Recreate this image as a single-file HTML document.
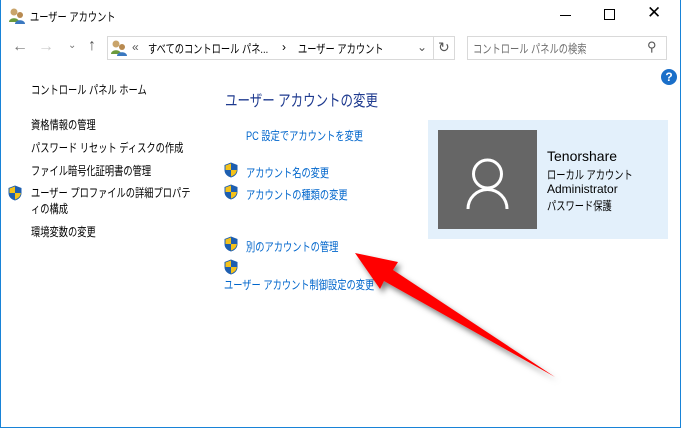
<!DOCTYPE html>
<html><head><meta charset="utf-8"><style>
*{margin:0;padding:0;box-sizing:border-box}
body{width:681px;height:429px;background:#fff;position:relative;overflow:hidden;font-family:"Liberation Sans","Noto Sans CJK JP",sans-serif;font-size:12px;color:#000}
.a{position:absolute;white-space:nowrap}
.j{transform:scaleX(0.77);transform-origin:0 0}
.l{color:#0066cc}
.sh{position:absolute;width:14px;height:16px}
</style></head><body>
<div class="a" style="left:0;top:0;width:681px;height:428px;border:1px solid #1883d7;border-top:none"></div>
<svg class="a" style="left:8px;top:7px" width="18" height="18" viewBox="0 0 18 18"><circle cx="6" cy="5" r="3.5" fill="#c9a46a"/><path d="M1 15c0-5 10-5 10 0z" fill="#6c9a3c"/><circle cx="12" cy="8" r="3" fill="#b88a50"/><path d="M7 17c0-5 10-5 10 0z" fill="#3a78c0"/></svg>
<div class="a j" style="left:30px;top:8px">ユーザー アカウント</div>
<div class="a" style="left:560px;top:15px;width:11px;height:1px;background:#000"></div>
<div class="a" style="left:604px;top:9px;width:11px;height:11px;border:1px solid #000"></div>
<div class="a" style="left:647px;top:3px;font-size:17px">✕</div>
<div class="a" style="left:12px;top:38px;font-size:16px;color:#777">←</div>
<div class="a" style="left:38px;top:38px;font-size:16px;color:#ccc">→</div>
<div class="a" style="left:68px;top:40px;font-size:10px;color:#777">⌄</div>
<div class="a" style="left:88px;top:37px;font-size:16px;color:#555">↑</div>
<div class="a" style="left:107px;top:36px;width:348px;height:24px;border:1px solid #d9d9d9"></div>
<svg class="a" style="left:110px;top:39px" width="18" height="18" viewBox="0 0 18 18"><circle cx="6" cy="5" r="3.5" fill="#c9a46a"/><path d="M1 15c0-5 10-5 10 0z" fill="#6c9a3c"/><circle cx="12" cy="8" r="3" fill="#b88a50"/><path d="M7 17c0-5 10-5 10 0z" fill="#3a78c0"/></svg>
<div class="a" style="left:132px;top:40px;color:#555">«</div>
<div class="a j" style="left:148px;top:40px">すべてのコントロール パネ...</div>
<div class="a" style="left:282px;top:40px">›</div>
<div class="a j" style="left:298px;top:40px">ユーザー アカウント</div>
<div class="a" style="left:417px;top:40px;color:#555">⌄</div>
<div class="a" style="left:433px;top:37px;width:1px;height:22px;background:#d9d9d9"></div>
<div class="a" style="left:438px;top:39px;color:#555;font-size:14px">↻</div>
<div class="a" style="left:467px;top:36px;width:200px;height:24px;border:1px solid #d9d9d9"></div>
<div class="a j" style="left:473px;top:40px;color:#6d6d6d">コントロール パネルの検索</div>
<div class="a" style="left:647px;top:39px;color:#555;font-size:13px">⚲</div>
<div class="a" style="left:661px;top:69px;width:16px;height:16px;border-radius:50%;background:#1a6fc9;color:#fff;font-weight:bold;font-size:12px;text-align:center;line-height:16px">?</div>
<div class="a j" style="left:31px;top:81px">コントロール パネル ホーム</div>
<div class="a j" style="left:31px;top:116px">資格情報の管理</div>
<div class="a j" style="left:31px;top:139px">パスワード リセット ディスクの作成</div>
<div class="a j" style="left:31px;top:162px">ファイル暗号化証明書の管理</div>
<div class="a j" style="left:31px;top:185px;line-height:16px">ユーザー プロファイルの詳細プロパテ<br>ィの構成</div>
<div class="a j" style="left:31px;top:223px">環境変数の変更</div>
<div class="a j" style="left:225px;top:87px;font-size:16px;color:#1e3a8f;transform:scaleX(0.78)">ユーザー アカウントの変更</div>
<div class="a l j" style="left:246px;top:127px">PC 設定でアカウントを変更</div>
<div class="a l j" style="left:246px;top:164px">アカウント名の変更</div>
<div class="a l j" style="left:246px;top:186px">アカウントの種類の変更</div>
<div class="a l j" style="left:246px;top:238px">別のアカウントの管理</div>
<div class="a l j" style="left:224px;top:276px">ユーザー アカウント制御設定の変更</div>
<svg width="0" height="0" style="position:absolute"><defs><g id="s"><path d="M7 0.5L13.5 3v5c0 4-3 6.5-6.5 7.5C3.5 14.5 0.5 12 0.5 8V3z" fill="#1e5fb0"/><path d="M7 1.5V8H1.5V3.5zM7 8h5.8c-.3 3.5-2.8 5.5-5.8 6.5z" fill="#f4c21a"/></g></defs></svg>
<svg class="sh" style="left:8px;top:185px"><use href="#s"/></svg>
<svg class="sh" style="left:224px;top:162px"><use href="#s"/></svg>
<svg class="sh" style="left:224px;top:184px"><use href="#s"/></svg>
<svg class="sh" style="left:224px;top:236px"><use href="#s"/></svg>
<svg class="sh" style="left:224px;top:259px"><use href="#s"/></svg>
<div class="a" style="left:428px;top:120px;width:240px;height:119px;background:#e3f0fb"></div>
<div class="a" style="left:438px;top:130px;width:99px;height:99px;background:#666"></div>
<svg class="a" style="left:438px;top:130px" width="99" height="99"><circle cx="49.5" cy="44" r="14" fill="none" stroke="#fff" stroke-width="3"/><path d="M30 79a19.5 19.5 0 0 1 39 0" fill="none" stroke="#fff" stroke-width="3"/></svg>
<div class="a" style="left:547px;top:148px;font-size:14px">Tenorshare</div>
<div class="a j" style="left:547px;top:166px">ローカル アカウント</div>
<div class="a" style="left:547px;top:182px">Administrator</div>
<div class="a j" style="left:547px;top:197px">パスワード保護</div>
<svg class="a" style="left:0;top:0" width="681" height="429"><defs><filter id="f"><feDropShadow dx="3" dy="4" stdDeviation="3" flood-opacity="0.5"/></filter></defs>
<polygon points="355,253 398,262 393,270 555,377 384,281 380,289" fill="#ff0000" filter="url(#f)"/></svg>
</body></html>
